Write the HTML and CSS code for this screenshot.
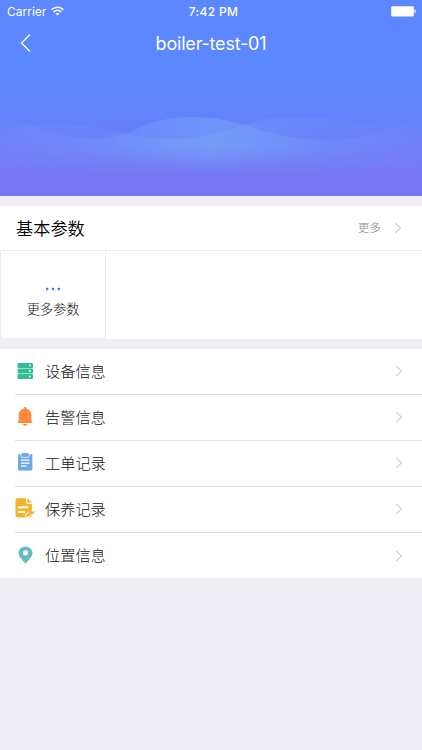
FILE: index.html
```
<!DOCTYPE html>
<html lang="zh-CN">
  <head>
    <meta charset="UTF-8" />
    <meta name="viewport" content="width=device-width, initial-scale=1.0" />
    <title>boiler-test-01</title>
    <link rel="stylesheet" href="styles.css">
  </head>
  <body>
    <header class="hero">
      <div class="status-bar">
        <div class="carrier">
          <span>Carrier</span>
          <svg class="wifi" width="13" height="10" viewBox="0 0 13 10" fill="none" stroke="#fff" stroke-width="1.6">
            <path d="M0.7 3.6C4 0.4 9 0.4 12.3 3.6" />
            <path d="M2.8 5.9C5 3.9 8 3.9 10.2 5.9" />
            <path d="M6.5 9.6L4.4 7.5C5.6 6.4 7.4 6.4 8.6 7.5Z" fill="#fff" stroke="none" />
          </svg>
        </div>
        <span class="time">7:42 PM</span>
        <div class="power">
          <svg width="26" height="11" viewBox="0 0 26 11" fill="#fff">
            <rect x="1.2" y="0.3" width="22.6" height="10.2" rx="1" />
            <path d="M24.3 3.6h0.6q0.8 0 0.8 1v1.6q0 1-0.8 1h-0.6z" opacity="0.8" />
          </svg>
        </div>
      </div>
      <div class="nav-bar">
        <svg class="back" width="12" height="20" viewBox="0 0 12 20" fill="none" stroke="#fff" stroke-width="1.3">
          <path d="M10 1.5L1.5 10L10 18.5" />
        </svg>
        <h1>boiler-test-01</h1>
      </div>
      <svg class="waves" width="422" height="130" viewBox="0 66 422 130">
        <defs>
          <linearGradient id="glow" x1="0" y1="0" x2="422" y2="0" gradientUnits="userSpaceOnUse">
            <stop offset="0" stop-color="#8aa0ff" stop-opacity="0.1" />
            <stop offset="0.25" stop-color="#7ca8fa" stop-opacity="0.22" />
            <stop offset="0.5" stop-color="#7cb0fa" stop-opacity="0.42" />
            <stop offset="0.75" stop-color="#7ca8fa" stop-opacity="0.2" />
            <stop offset="1" stop-color="#8aa0ff" stop-opacity="0.08" />
          </linearGradient>
          <linearGradient id="fade" x1="0" y1="115" x2="0" y2="174" gradientUnits="userSpaceOnUse">
            <stop offset="0.55" stop-color="#fff" />
            <stop offset="0.75" stop-color="#999" />
            <stop offset="1" stop-color="#000" />
          </linearGradient>
          <mask id="fade-mask" maskUnits="userSpaceOnUse" x="0" y="66" width="422" height="130">
            <rect x="0" y="66" width="422" height="130" fill="url(#fade)" />
          </mask>
        </defs>
        <g fill="url(#glow)" mask="url(#fade-mask)">
          <path d="M0 117C28 119 50 139 93 139C139 139 137 117 193 117C247 117 261 140 325 140C380 140 396 123 422 117V196H0Z" />
          <path class="wave-back" d="M0 131C20 126 38 125 60 125C105 125 125 139 175 139C230 139 235 117 300 117C350 117 385 129 422 131V196H0Z" />
        </g>
      </svg>
    </header>

    <section class="params">
      <div class="params-head">
        <h2>基本参数</h2>
        <span class="more">更多</span>
        <svg class="arrow" width="8" height="12" viewBox="0 0 8 12"><path d="M1.2 1L6.5 6L1.2 11" /></svg>
      </div>
      <div class="params-grid">
        <div class="param">
          <svg width="16" height="4" viewBox="0 0 16 4" fill="#4f76e8">
            <rect x="1" y="0.8" width="2.4" height="2.4" rx="0.6" />
            <rect x="6.8" y="0.8" width="2.4" height="2.4" rx="0.6" />
            <rect x="12.6" y="0.8" width="2.4" height="2.4" rx="0.6" />
          </svg>
          <span>更多参数</span>
        </div>
      </div>
    </section>

    <ul class="menu">
      <li>
        <svg class="icon" width="20" height="20" viewBox="0 0 20 20">
          <g fill="#33bd97">
            <rect x="2.6" y="2" width="15.4" height="4.9" rx="1" />
            <rect x="2.6" y="7.5" width="15.4" height="4.9" rx="1" />
            <rect x="2.6" y="13" width="15.4" height="4.9" rx="1" />
          </g>
          <g fill="#fff">
            <circle cx="14.8" cy="4.4" r="0.9" />
            <circle cx="14.8" cy="10" r="0.9" />
            <circle cx="14.8" cy="15.5" r="0.9" />
          </g>
        </svg>
        <span class="label">设备信息</span>
        <svg class="arrow" width="8" height="12" viewBox="0 0 8 12"><path d="M1.2 1L6.5 6L1.2 11" /></svg>
      </li>
      <li>
        <svg class="icon" width="20" height="20" viewBox="0 0 20 20" fill="#ff8a3d">
          <path d="M8.8 1.4Q8.8 0.1 10.1 0.1T11.4 1.4C14.8 2.2 16.4 5 16.4 8V13.4L17.4 15V16.1H2.8V15L3.8 13.4V8C3.8 5 5.4 2.2 8.8 1.4Z" />
          <path d="M7.8 17h4.6Q12.2 18.7 10.1 18.7T7.8 17Z" />
        </svg>
        <span class="label">告警信息</span>
        <svg class="arrow" width="8" height="12" viewBox="0 0 8 12"><path d="M1.2 1L6.5 6L1.2 11" /></svg>
      </li>
      <li>
        <svg class="icon icon-raised" width="20" height="20" viewBox="0 0 20 20">
          <rect x="3" y="2.2" width="14.4" height="16.2" rx="1.2" fill="#6aabe4" />
          <path d="M6.2 2V4.2Q6.2 5.2 7.2 5.2H13.2Q14.2 5.2 14.2 4.2V2" fill="none" stroke="#fff" stroke-width="0.8" />
          <rect x="6.8" y="1" width="6.8" height="3.4" rx="1" fill="#6aabe4" />
          <path d="M6 8.2H14.4M6 11.2H14.4M6 14.2H11.6" stroke="#fff" stroke-width="1.2" />
        </svg>
        <span class="label">工单记录</span>
        <svg class="arrow" width="8" height="12" viewBox="0 0 8 12"><path d="M1.2 1L6.5 6L1.2 11" /></svg>
      </li>
      <li>
        <svg class="icon icon-raised" width="20" height="20" viewBox="0 0 20 20">
          <path d="M2.6 0.3H11V4.2Q11 5.8 12.6 5.8H16.8V17.2Q16.8 19.5 14.5 19.5H2.6Q0.5 19.5 0.5 17.4V2.4Q0.5 0.3 2.6 0.3Z" fill="#f3b32b" />
          <path d="M12.3 0.3L16.8 4.6H13.3Q12.3 4.6 12.3 3.6Z" fill="#f3b32b" />
          <path d="M3.9 9.2H12.4M3.9 14H9.4" stroke="#fff" stroke-width="1.9" stroke-linecap="round" />
          <path d="M12.4 17.6L16 14" stroke="#fff" stroke-width="4.4" stroke-linecap="round" />
          <path d="M12.4 17.6L15.8 14.4" stroke="#f3b32b" stroke-width="2.8" stroke-linecap="round" />
          <path d="M17.6 10.4C14.6 10.2 13.5 12.6 14.2 14.6C15.4 17.2 19.9 16.6 19.8 12.4L17.8 14L16.2 12.6Z" fill="#f3b32b" />
        </svg>
        <span class="label">保养记录</span>
        <svg class="arrow" width="8" height="12" viewBox="0 0 8 12"><path d="M1.2 1L6.5 6L1.2 11" /></svg>
      </li>
      <li>
        <svg class="icon icon-raised" width="20" height="20" viewBox="0 0 20 20" fill="#62bcc0">
          <path fill-rule="evenodd" d="M10.5 1.4C14.4 1.4 17.5 4.4 17.5 8.1C17.5 12 13.6 14.9 10.5 18.7C7.4 14.9 3.5 12 3.5 8.1C3.5 4.4 6.6 1.4 10.5 1.4ZM10.5 5.2A2.6 2.6 0 1 0 10.5 10.4A2.6 2.6 0 1 0 10.5 5.2Z" />
        </svg>
        <span class="label">位置信息</span>
        <svg class="arrow" width="8" height="12" viewBox="0 0 8 12"><path d="M1.2 1L6.5 6L1.2 11" /></svg>
      </li>
    </ul>
  </body>
</html>
```

FILE: styles.css
```
* {
  box-sizing: border-box;
}
body {
  margin: 0;
  background-color: #efeef5;
  color: #111;
  font-family: Inter, "Noto Sans CJK SC", sans-serif;
}
h1,
h2,
ul {
  margin: 0;
  padding: 0;
  font-weight: normal;
}
svg {
  display: block;
  flex: none;
}

/* header */
.hero {
  height: 196px;
  overflow: hidden;
  background: linear-gradient(#5c87ff 0, #5c88ff 80px, #6482fb 115px, #6e7bf6 150px, #7777f1 180px);
}
.status-bar {
  display: grid;
  grid-template-columns: 1fr auto 1fr;
  align-items: center;
  height: 22px;
  padding: 0 6px 0 7px;
  color: #fff;
  font-size: 12px;
}
.carrier {
  display: flex;
  align-items: center;
  gap: 5px;
}
.time {
  margin-left: 4px;
  font-weight: 500;
  letter-spacing: 0.3px;
}
.power {
  justify-self: end;
}
.nav-bar {
  display: grid;
  grid-template-columns: 40px 1fr 40px;
  align-items: center;
  height: 44px;
  padding: 0 0 2px;
  color: #fff;
}
.back {
  margin-left: 20px;
}
.nav-bar h1 {
  padding-top: 1px;
  text-align: center;
  font-size: 18px;
  line-height: 24px;
  letter-spacing: -0.2px;
}
.wave-back {
  opacity: 0.75;
}

/* basic parameters */
.params {
  height: 133px;
  margin-top: 10px;
  background-color: #fff;
}
.params-head {
  display: flex;
  align-items: center;
  height: 45px;
  padding: 0 20px 0 16px;
  border-bottom: 1px solid #ececec;
}
.params-head h2 {
  flex: 1;
  padding-bottom: 2px;
  color: #000;
  font-size: 17.2px;
  font-weight: 350;
}
.more {
  margin-right: 13px;
  padding-bottom: 2px;
  color: #888;
  font-size: 11.5px;
  font-weight: 300;
}
.arrow {
  fill: none;
  stroke: #b4b4b4;
  stroke-width: 1;
}
.params-grid {
  display: flex;
  height: 88px;
}
.param {
  display: flex;
  flex-direction: column;
  align-items: center;
  width: 106px;
  padding-top: 36px;
  border: 1px solid #ececec;
  border-top: none;
  font-size: 13.2px;
  font-weight: 300;
}
.param span {
  margin-top: 8px;
  line-height: 20px;
}

/* menu */
.menu {
  margin-top: 10px;
  list-style: none;
  background-color: #fff;
}
.menu li {
  display: flex;
  align-items: center;
  height: 45.9px;
  margin-left: 15px;
  padding-right: 19px;
  border-bottom: 1px solid #e2e2e2;
}
.menu li:last-child {
  border-bottom: none;
}
.icon-raised {
  margin-bottom: 2px;
}
.label {
  flex: 1;
  margin-left: 10px;
  padding-bottom: 3px;
  font-size: 15.2px;
  font-weight: 300;
}
```
